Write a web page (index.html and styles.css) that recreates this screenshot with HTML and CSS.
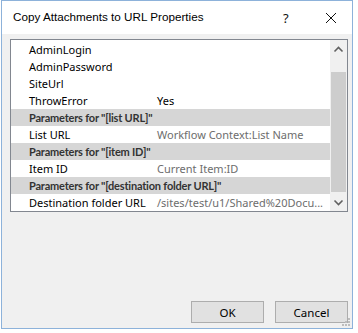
FILE: index.html
```html
<!DOCTYPE html>
<html>
<head>
<meta charset="utf-8">
<link rel="stylesheet" href="styles.css">
</head>
<body>
<div class="window">
  <div class="titlebar">
    <span class="title">Copy Attachments to URL Properties</span>
    <span class="help">?</span>
    <svg class="close" width="12" height="12" viewBox="0 0 12 12"><path d="M1 1L11 11M11 1L1 11" stroke="#111" stroke-width="1" fill="none"/></svg>
  </div>
  <div class="content">
    <div class="grid">
      <div class="rows">
        <div class="row"><span class="name">AdminLogin</span><span class="val"></span></div>
        <div class="row"><span class="name">AdminPassword</span><span class="val"></span></div>
        <div class="row"><span class="name">SiteUrl</span><span class="val"></span></div>
        <div class="row"><span class="name">ThrowError</span><span class="val">Yes</span></div>
        <div class="row cat"><span class="name">Parameters for "[list URL]"</span></div>
        <div class="row"><span class="name">List URL</span><span class="val dim">Workflow Context:List Name</span></div>
        <div class="row cat"><span class="name">Parameters for "[item ID]"</span></div>
        <div class="row"><span class="name">Item ID</span><span class="val dim">Current Item:ID</span></div>
        <div class="row cat"><span class="name">Parameters for "[destination folder URL]"</span></div>
        <div class="row"><span class="name">Destination folder URL</span><span class="val dim">/sites/test/u1/Shared%20Docu...</span></div>
      </div>
      <div class="scrollbar">
        <svg class="arrow up" width="17" height="17" viewBox="0 0 17 17"><path d="M4.5 10.5L8.5 6.5L12.5 10.5" stroke="#606060" stroke-width="1.6" fill="none"/></svg>
        <div class="track"><div class="thumb"></div></div>
        <svg class="arrow" width="17" height="17" viewBox="0 0 17 17"><path d="M4.5 6.5L8.5 10.5L12.5 6.5" stroke="#606060" stroke-width="1.6" fill="none"/></svg>
      </div>
    </div>
    <div class="buttons">
      <button class="btn">OK</button>
      <button class="btn">Cancel</button>
    </div>
    <svg class="grip" width="10" height="10" viewBox="0 0 10 10">
      <rect x="7" y="1" width="2" height="2" fill="#bdbdbd"/>
      <rect x="4" y="4" width="2" height="2" fill="#bdbdbd"/>
      <rect x="7" y="4" width="2" height="2" fill="#bdbdbd"/>
      <rect x="1" y="7" width="2" height="2" fill="#bdbdbd"/>
      <rect x="4" y="7" width="2" height="2" fill="#bdbdbd"/>
      <rect x="7" y="7" width="2" height="2" fill="#bdbdbd"/>
    </svg>
  </div>
</div>
</body>
</html>
```
FILE: styles.css
```css
html, body {
  margin: 0;
  padding: 0;
  background: #ffffff;
}
body {
  width: 358px;
  height: 333px;
  font-family: "Noto Sans", "DejaVu Sans", sans-serif;
}
.window {
  margin-left: 1px;
  width: 350px;
  height: 327px;
  border: 1px solid #8db2da;
  display: flex;
  flex-direction: column;
  background: #f0f0f0;
}
.titlebar {
  height: 33px;
  background: #ffffff;
  display: flex;
  align-items: center;
  position: relative;
}
.title {
  margin-left: 11px;
  font-family: "Liberation Sans", Arial, sans-serif;
  font-size: 11.7px;
  color: #000;
  margin-top: -2px;
}
.help {
  position: absolute;
  left: 281px;
  top: 8px;
  font-size: 13px;
  color: #111;
}
.close {
  position: absolute;
  left: 323px;
  top: 11px;
}
.content {
  flex: 1;
  display: flex;
  flex-direction: column;
  position: relative;
}
.grid {
  margin: 5px 0 0 8px;
  width: 336px;
  height: 171px;
  border: 1px solid #828790;
  background: #ffffff;
  display: flex;
}
.rows {
  flex: 1;
  display: flex;
  flex-direction: column;
  padding-top: 1px;
}
.row {
  height: 17px;
  display: flex;
  align-items: center;
  font-size: 11px;
  color: #000;
  white-space: nowrap;
}
.row .name {
  width: 128px;
  padding-left: 18px;
  flex: none;
}
.row .val {
  flex: 1;
}
.row .val.dim {
  color: #6d6d6d;
}
.row.cat {
  background: #d6d6d6;
  font-family: "Lato", "Liberation Sans", sans-serif;
  font-weight: bold;
  font-size: 11px;
  letter-spacing: -0.2px;
  color: #333;
}
.row.cat .name {
  width: auto;
}
.scrollbar {
  width: 17px;
  display: flex;
  flex-direction: column;
  background: #f0f0f0;
}
.arrow {
  display: block;
  flex: none;
}
.arrow.up {
  margin-top: 1px;
  margin-bottom: -1px;
}
.track {
  flex: 1;
  position: relative;
}
.thumb {
  position: absolute;
  left: 1px;
  right: 1px;
  top: 15px;
  bottom: 2px;
  background: #cdcdcd;
}
.buttons {
  margin-top: auto;
  margin-bottom: 5px;
  margin-right: 4px;
  display: flex;
  justify-content: flex-end;
  gap: 11px;
}
.btn {
  width: 73px;
  height: 22px;
  background: #e1e1e1;
  border: 1px solid #adadad;
  font-family: "Noto Sans", "DejaVu Sans", sans-serif;
  font-size: 11.5px;
  color: #000;
  padding: 0;
}
.grip {
  position: absolute;
  right: 1px;
  bottom: 1px;
}
```
